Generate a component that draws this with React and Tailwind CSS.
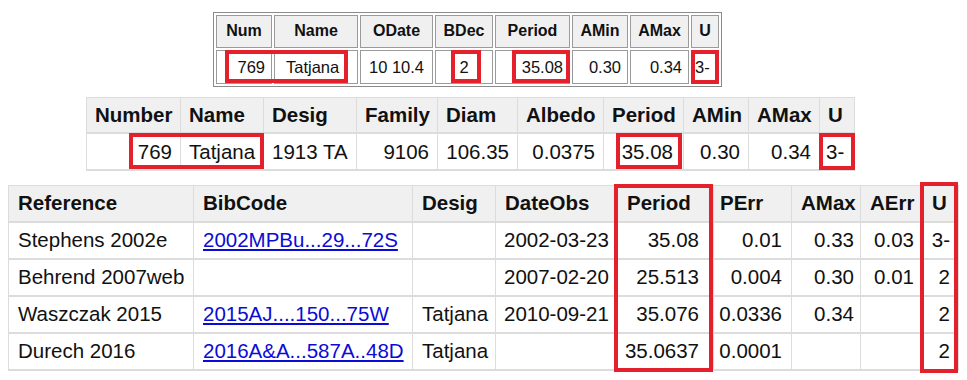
import React from "react";

const t1Head = ["Num", "Name", "ODate", "BDec", "Period", "AMin", "AMax", "U"];
const t1Row = [
  { v: "769", a: "r" },
  { v: "Tatjana", a: "l" },
  { v: "10 10.4", a: "c" },
  { v: "2", a: "c" },
  { v: "35.08", a: "r" },
  { v: "0.30", a: "r" },
  { v: "0.34", a: "r" },
  { v: "3-", a: "l" },
];

const t2Head = ["Number", "Name", "Desig", "Family", "Diam", "Albedo", "Period", "AMin", "AMax", "U"];
const t2Row = [
  { v: "769", a: "r" },
  { v: "Tatjana", a: "l" },
  { v: "1913 TA", a: "l" },
  { v: "9106", a: "r" },
  { v: "106.35", a: "r" },
  { v: "0.0375", a: "r" },
  { v: "35.08", a: "r" },
  { v: "0.30", a: "r" },
  { v: "0.34", a: "r" },
  { v: "3-", a: "l" },
];

const t3Head = ["Reference", "BibCode", "Desig", "DateObs", "Period", "PErr", "AMax", "AErr", "U"];
const t3Rows = [
  ["Stephens 2002e", "2002MPBu...29...72S", "", "2002-03-23", "35.08", "0.01", "0.33", "0.03", "3-"],
  ["Behrend 2007web", "", "", "2007-02-20", "25.513", "0.004", "0.30", "0.01", "2"],
  ["Waszczak 2015", "2015AJ....150...75W", "Tatjana", "2010-09-21", "35.076", "0.0336", "0.34", "", "2"],
  ["Durech 2016", "2016A&A...587A..48D", "Tatjana", "", "35.0637", "0.0001", "", "", "2"],
];
const t3Align = ["l", "l", "l", "l", "r", "r", "r", "r", "r"];
const t3Pad = [
  "pl-[9px] pr-[4px]",
  "pl-[9px] pr-[4px]",
  "pl-[9px] pr-[4px]",
  "pl-[8px] pr-[2px]",
  "pl-[4px] pr-[14px]",
  "pl-[2px] pr-[9px]",
  "pl-[2px] pr-[6px]",
  "pl-[2px] pr-[8px]",
  "pl-[2px] pr-[8px]",
];

function al(a) {
  if (a === "r") return "justify-end";
  if (a === "c") return "justify-center";
  return "justify-start";
}

function RedBox({ cls }) {
  return <div className={"absolute border-[4px] border-[#e3202b] pointer-events-none " + cls} />;
}

export default function App() {
  return (
    <div className="relative w-[967px] h-[380px] bg-white text-[#111] font-['Liberation_Sans',Arial,sans-serif] overflow-hidden whitespace-nowrap">
      <div className="flex flex-col items-start">
        {/* Table 1 */}
        <div className="ml-[213px] mt-[12px] border border-[#8a8a8a] p-[2px] grid grid-cols-[56px_84px_73px_58px_75px_56px_59px_28px] grid-rows-[33px_34px] gap-[2px] text-[16px] leading-[18px]">
          {t1Head.map((h) => (
            <div key={h} className="border border-[#9a9a9a] bg-[#f0f0f0] font-bold flex items-center justify-center px-[2px] pb-[1px]">
              {h}
            </div>
          ))}
          {t1Row.map((c, i) => (
            <div
              key={i}
              className={
                "border border-[#9a9a9a] bg-white flex items-center text-[16.5px] pb-[1px] " +
                (i === 1 ? "pl-[11px] " : i === 7 ? "pl-[3px] " : "px-[6px] ") +
                al(c.a)
              }
            >
              {c.v}
            </div>
          ))}
        </div>

        {/* Table 2 */}
        <div className="ml-[86px] mt-[10px] border-l border-t border-[#dcdcdc] grid grid-cols-[94px_83px_93px_81px_80px_86px_80px_65px_71px_35px] grid-rows-[36px_37px] text-[20.5px] leading-[23px]">
          {t2Head.map((h) => (
            <div key={h} className="border-r border-b-2 border-[#dcdcdc] bg-[#f0f0f0] font-bold flex items-center pl-[8px] pb-[1px]">
              {h}
            </div>
          ))}
          {t2Row.map((c, i) => (
            <div
              key={i}
              className={
                "border-r border-b-2 border-[#dcdcdc] bg-white flex items-center pb-[1px] " +
                (c.v === "3-" ? "pl-[6px] " : i === 6 ? "pr-[10px] " : "px-[8px] ") +
                al(c.a)
              }
            >
              {c.v}
            </div>
          ))}
        </div>

        {/* Table 3 */}
        <div className="ml-[8px] mt-[14px] border-l border-t border-[#dcdcdc] grid grid-cols-[185px_219px_83px_119px_99px_78px_69px_62px_36px] grid-rows-[37px_37px_37px_37px_37px] text-[20.5px] leading-[23px]">
          {t3Head.map((h, i) => (
            <div
              key={h}
              className={
                "border-r border-b-2 border-[#dcdcdc] bg-[#f0f0f0] font-bold flex items-center pb-[2px] " +
                (i === 4 ? "pl-[12px]" : i === 5 ? "pl-[6px]" : "pl-[9px]")
              }
            >
              {h}
            </div>
          ))}
          {t3Rows.map((row, ri) =>
            row.map((v, ci) => (
              <div
                key={ri + "-" + ci}
                className={"border-r border-b-2 border-[#dcdcdc] bg-white flex items-center pb-[3px] " + t3Pad[ci] + " " + al(t3Align[ci])}
              >
                {ci === 1 && v ? (
                  <a href="#" className="text-[#0b0bd6] underline">{v}</a>
                ) : (
                  v
                )}
              </div>
            ))
          )}
        </div>
      </div>

      {/* Red annotation boxes */}
      <RedBox cls="left-[225px] top-[50px] w-[123px] h-[33px]" />
      <RedBox cls="left-[451px] top-[50px] w-[30px] h-[33px]" />
      <RedBox cls="left-[512px] top-[50px] w-[58px] h-[33px]" />
      <RedBox cls="left-[691px] top-[50px] w-[28px] h-[34px]" />

      <RedBox cls="left-[129px] top-[133px] w-[135px] h-[36px]" />
      <RedBox cls="left-[616px] top-[133px] w-[66px] h-[36px]" />
      <RedBox cls="left-[819px] top-[133px] w-[36px] h-[37px]" />

      <RedBox cls="left-[614px] top-[184px] w-[99px] h-[188px]" />
      <RedBox cls="left-[920px] top-[182px] w-[38px] h-[191px]" />
    </div>
  );
}
